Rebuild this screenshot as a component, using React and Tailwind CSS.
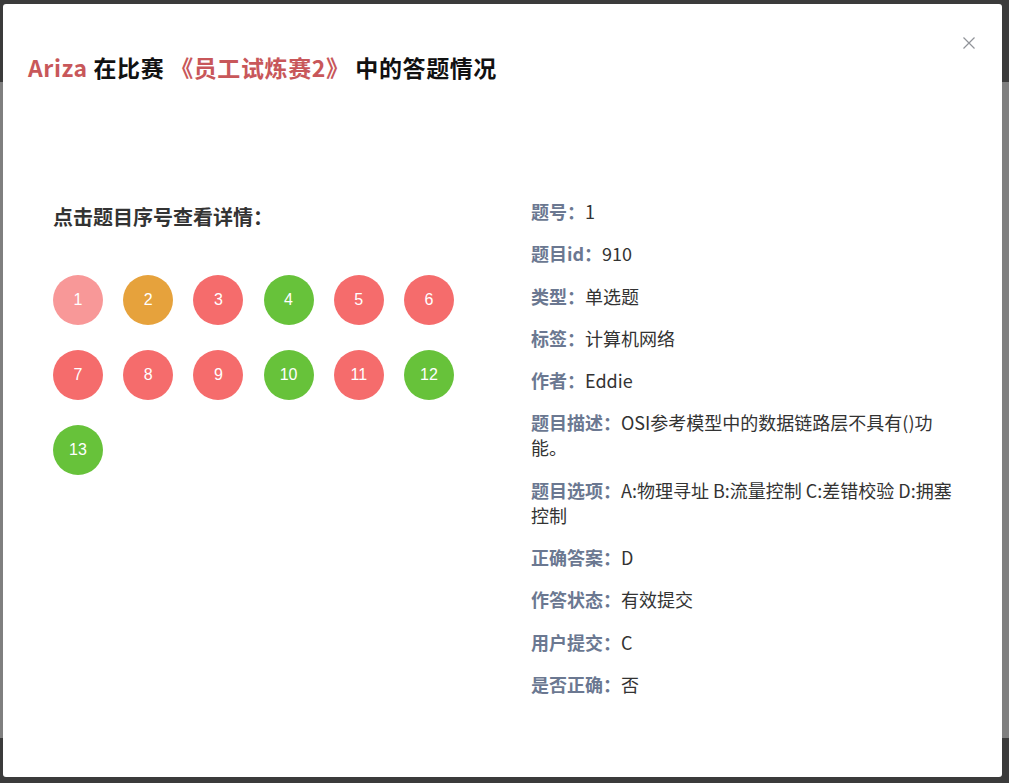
import React from "react";

const circles = [
  { n: 1, c: "bg-[#f89898]" },
  { n: 2, c: "bg-[#e6a23c]" },
  { n: 3, c: "bg-[#f56c6c]" },
  { n: 4, c: "bg-[#67c23a]" },
  { n: 5, c: "bg-[#f56c6c]" },
  { n: 6, c: "bg-[#f56c6c]" },
  { n: 7, c: "bg-[#f56c6c]" },
  { n: 8, c: "bg-[#f56c6c]" },
  { n: 9, c: "bg-[#f56c6c]" },
  { n: 10, c: "bg-[#67c23a]" },
  { n: 11, c: "bg-[#f56c6c]" },
  { n: 12, c: "bg-[#67c23a]" },
  { n: 13, c: "bg-[#67c23a]" },
];

const details = [
  ["题号：", "1"],
  ["题目id：", "910"],
  ["类型：", "单选题"],
  ["标签：", "计算机网络"],
  ["作者：", "Eddie"],
  ["题目描述：", "OSI参考模型中的数据链路层不具有()功能。"],
  ["题目选项：", "A:物理寻址 B:流量控制 C:差错校验 D:拥塞控制"],
  ["正确答案：", "D"],
  ["作答状态：", "有效提交"],
  ["用户提交：", "C"],
  ["是否正确：", "否"],
];

export default function App() {
  return (
    <div
      className="relative w-[1009px] h-[783px] overflow-hidden"
      style={{ fontFamily: '"Noto Sans CJK SC", "Liberation Sans", sans-serif' }}
    >
      {/* dimmed page behind */}
      <div className="flex flex-col h-full">
        <div className="h-[82px] bg-[#3b3b3b]" />
        <div className="flex-1 bg-[#7f7f7f]" />
        <div className="h-[45px] bg-[#3b3b3b]" />
      </div>

      {/* modal */}
      <div className="absolute left-[3px] top-[4px] w-[999px] h-[773px] bg-white rounded-[3px] flex flex-col">
        <div className="relative pl-[25px] pt-[47px] h-[195px]">
          <h2 className="text-[23px] leading-[32px] font-bold text-[#111] tracking-[0.6px]">
            <span className="text-[#c8575a]">Ariza</span> 在比赛{" "}
            <span className="text-[#c8575a]">《员工试炼赛2》</span> 中的答题情况
          </h2>
          <button className="absolute left-[960px] top-[33px] w-[12px] h-[12px] flex items-center justify-center">
            <svg width="12" height="12" viewBox="0 0 12 12">
              <path d="M0.5 0.5 L11.5 11.5 M11.5 0.5 L0.5 11.5" stroke="#909399" strokeWidth="1.2" fill="none" />
            </svg>
          </button>
        </div>

        <div className="flex">
          <div className="w-[528px] pl-[50px] pt-[5px]">
            <div className="text-[20px] leading-[26px] font-bold text-[#333]">点击题目序号查看详情：</div>
            <div className="mt-[45px] grid grid-cols-[repeat(6,50px)] gap-x-[20.2px] gap-y-[25px]">
              {circles.map((c) => (
                <div
                  key={c.n}
                  className={`w-[50px] h-[50px] rounded-full ${c.c} flex items-center justify-center text-white text-[16px]`}
                  style={{ fontFamily: '"Liberation Sans", Arial, sans-serif' }}
                >
                  {c.n}
                </div>
              ))}
            </div>
          </div>

          <div className="w-[426px] flex flex-col gap-[17.3px]">
            {details.map(([k, v]) => (
              <div key={k} className="text-[18px] leading-[25px] text-[#333]">
                <span className="font-bold text-[#6b7891]">{k}</span>
                {v}
              </div>
            ))}
          </div>
        </div>
      </div>
    </div>
  );
}
